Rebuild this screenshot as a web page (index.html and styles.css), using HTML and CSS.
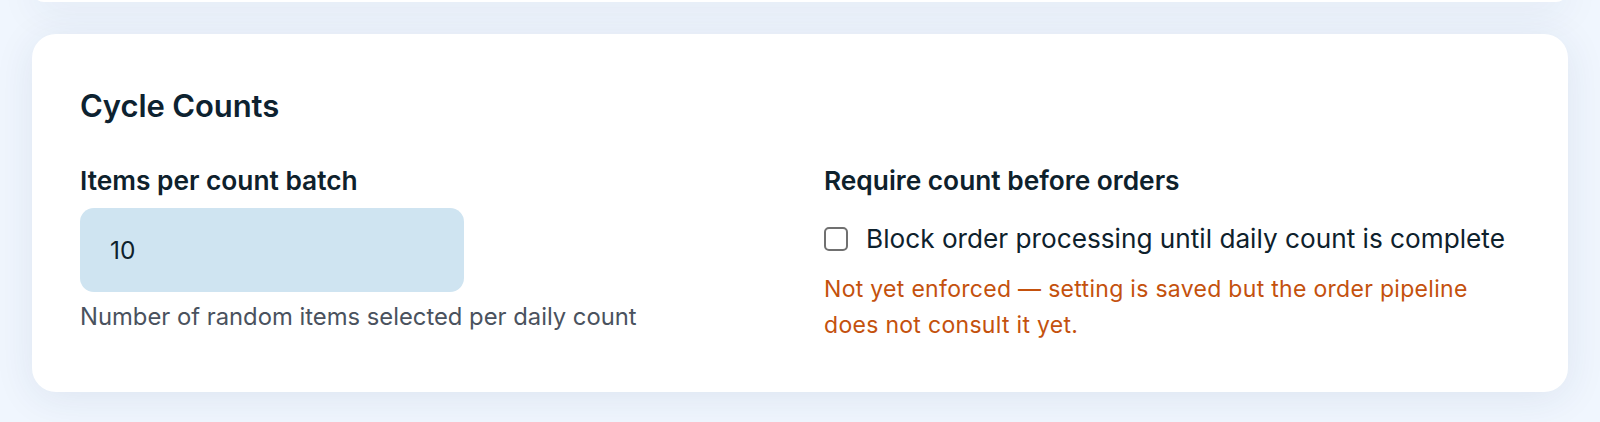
FILE: index.html
```html
<!DOCTYPE html>
<html lang="en">
<head>
  <meta charset="UTF-8">
  <title>Settings - Cycle Counts</title>
  <link rel="stylesheet" href="styles.css">
</head>
<body>

  <div class="page">
    <div class="card card-tail"></div>

    <div class="card">
      <h2>Cycle Counts</h2>

      <div class="settings-grid">
        <div class="field">
          <label for="batchSize">Items per count batch</label>
          <input type="text" id="batchSize" class="num-input" value="10">
          <p class="help">Number of random items selected per daily count</p>
        </div>

        <div class="field">
          <label>Require count before orders</label>
          <div class="check-row">
            <span class="checkbox"></span>
            <span>Block order processing until daily count is complete</span>
          </div>
          <p class="warning">Not yet enforced — setting is saved but the order pipeline does not consult it yet.</p>
        </div>
      </div>
    </div>
  </div>

</body>
</html>
```

FILE: styles.css
```css
body {
  margin: 0;
  background-color: #f0f6fe;
  color: #0e212c;
  font-family: Inter, "Noto Sans", sans-serif;
  overflow: hidden;
}
.page {
  padding: 0 32px;
}
.card {
  background-color: white;
  border-radius: 24px;
  box-shadow: 0 6px 40px rgba(30, 60, 100, 0.09);
  padding: 53px 48px 49px;
  margin-bottom: 32px;
}
.card-tail {
  height: 24px;
  padding: 0;
  margin-top: -22px;
}
h2 {
  font-size: 31px;
  font-weight: 600;
  letter-spacing: -0.1px;
  line-height: 37px;
  margin: 0 0 38px;
  color: #0d2230;
}
.settings-grid {
  display: grid;
  grid-template-columns: 1fr 1fr;
  gap: 48px;
}
.field label {
  display: block;
  font-size: 26.3px;
  font-weight: 600;
  line-height: 37.5px;
  color: #0e212c;
}
.num-input {
  display: block;
  width: 384px;
  height: 84px;
  box-sizing: border-box;
  margin-top: 8px;
  padding: 0 30px;
  border: none;
  border-radius: 14px;
  background-color: #cfe4f1;
  color: #0e212c;
  font-family: inherit;
  font-size: 24.5px;
}
.help {
  margin: 8px 0 0;
  font-size: 23.8px;
  line-height: 33.6px;
  color: #4a525e;
}
.check-row {
  display: flex;
  align-items: center;
  gap: 18px;
  margin-top: 21px;
  font-size: 26.2px;
  line-height: 36px;
}
.checkbox {
  width: 24px;
  height: 24px;
  box-sizing: border-box;
  border: 2px solid #707070;
  border-radius: 5px;
  background-color: white;
  flex-shrink: 0;
}
.warning {
  margin: 14px 0 0;
  padding-right: 20px;
  font-size: 23px;
  letter-spacing: 0.3px;
  line-height: 36px;
  color: #c4510d;
}
```
